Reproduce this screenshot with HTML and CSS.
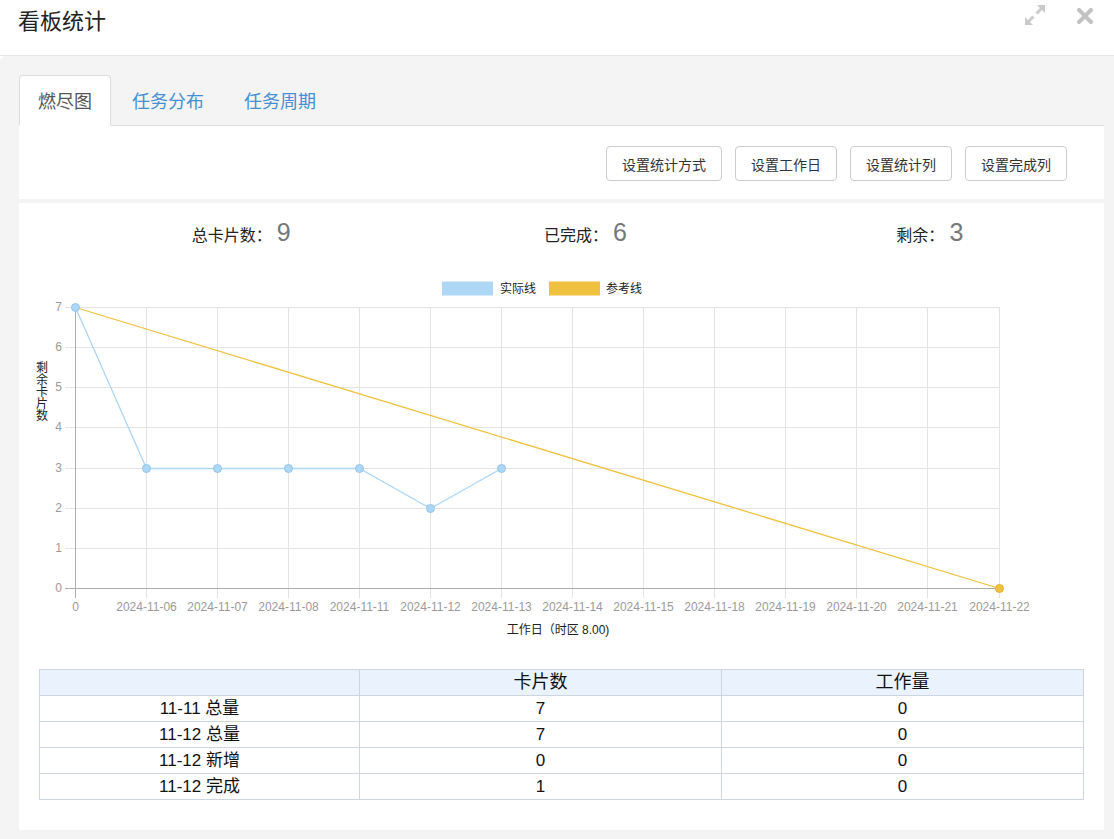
FILE: index.html
```html
<!DOCTYPE html>
<html lang="zh-CN">
<head>
<meta charset="utf-8">
<title>看板统计</title>
<link rel="stylesheet" href="styles.css">
</head>
<body>
<div class="header">
  <h1 class="title">看板统计</h1>
  <div class="win-actions">
    <svg class="icon-expand" width="22" height="22" viewBox="0 0 22 22">
      <polygon points="13,1 21,1 21,9" fill="#cacaca"/>
      <line x1="18" y1="4" x2="12.5" y2="9.5" stroke="#cacaca" stroke-width="3"/>
      <polygon points="1,13 1,21 9,21" fill="#cacaca"/>
      <line x1="4" y1="18" x2="9.5" y2="12.5" stroke="#cacaca" stroke-width="3"/>
    </svg>
    <svg class="icon-close" width="16" height="16" viewBox="0 0 16 16">
      <path d="M2 2 L14 14 M14 2 L2 14" stroke="#c2c2c2" stroke-width="4" stroke-linecap="round"/>
    </svg>
  </div>
</div>
<div class="main">
  <ul class="tabs">
    <li class="tab active">燃尽图</li>
    <li class="tab">任务分布</li>
    <li class="tab">任务周期</li>
  </ul>
  <div class="panel toolbar">
    <button class="btn">设置统计方式</button>
    <button class="btn">设置工作日</button>
    <button class="btn">设置统计列</button>
    <button class="btn">设置完成列</button>
  </div>
  <div class="panel chart-panel">
    <div class="stats">
      <div class="stat"><span class="stat-label">总卡片数：</span><span class="stat-num">9</span></div>
      <div class="stat"><span class="stat-label">已完成：</span><span class="stat-num">6</span></div>
      <div class="stat"><span class="stat-label">剩余：</span><span class="stat-num">3</span></div>
    </div>
    <svg class="chart" width="1085" height="390" viewBox="19 260 1085 390">
      <!-- legend -->
      <rect x="442" y="281.5" width="51" height="14" fill="#aed6f5"/>
      <text class="legend-text" x="500" y="293">实际线</text>
      <rect x="549" y="281.5" width="51" height="14" fill="#efc13e"/>
      <text class="legend-text" x="606" y="293">参考线</text>

      <!-- horizontal grid -->
      <g stroke="#e3e3e3" stroke-width="1">
        <line x1="65" y1="307.5" x2="999" y2="307.5"/>
        <line x1="65" y1="347.5" x2="999" y2="347.5"/>
        <line x1="65" y1="387.5" x2="999" y2="387.5"/>
        <line x1="65" y1="427.5" x2="999" y2="427.5"/>
        <line x1="65" y1="468.5" x2="999" y2="468.5"/>
        <line x1="65" y1="508.5" x2="999" y2="508.5"/>
        <line x1="65" y1="548.5" x2="999" y2="548.5"/>
      </g>
      <!-- vertical grid -->
      <g stroke="#e3e3e3" stroke-width="1">
        <line x1="146.5" y1="307" x2="146.5" y2="598"/>
        <line x1="217.5" y1="307" x2="217.5" y2="598"/>
        <line x1="288.5" y1="307" x2="288.5" y2="598"/>
        <line x1="359.5" y1="307" x2="359.5" y2="598"/>
        <line x1="430.5" y1="307" x2="430.5" y2="598"/>
        <line x1="501.5" y1="307" x2="501.5" y2="598"/>
        <line x1="572.5" y1="307" x2="572.5" y2="598"/>
        <line x1="643.5" y1="307" x2="643.5" y2="598"/>
        <line x1="714.5" y1="307" x2="714.5" y2="598"/>
        <line x1="785.5" y1="307" x2="785.5" y2="598"/>
        <line x1="856.5" y1="307" x2="856.5" y2="598"/>
        <line x1="927.5" y1="307" x2="927.5" y2="598"/>
        <line x1="999.5" y1="307" x2="999.5" y2="598"/>
      </g>
      <!-- axes -->
      <line x1="65" y1="588.5" x2="1000" y2="588.5" stroke="#acacac"/>
      <line x1="75.5" y1="307" x2="75.5" y2="598" stroke="#acacac"/>

      <!-- y labels -->
      <g class="tick-text" text-anchor="end">
        <text x="62" y="311">7</text>
        <text x="62" y="351">6</text>
        <text x="62" y="391">5</text>
        <text x="62" y="431">4</text>
        <text x="62" y="472">3</text>
        <text x="62" y="512">2</text>
        <text x="62" y="552">1</text>
        <text x="62" y="592">0</text>
      </g>
      <!-- y title -->
      <text class="axis-title" x="42" y="372" text-anchor="middle">
        <tspan x="42">剩</tspan><tspan x="42" dy="12">余</tspan><tspan x="42" dy="12">卡</tspan><tspan x="42" dy="12">片</tspan><tspan x="42" dy="12">数</tspan>
      </text>

      <!-- x labels -->
      <g class="tick-text" text-anchor="middle">
        <text x="75.5" y="611">0</text>
        <text x="146.5" y="611">2024-11-06</text>
        <text x="217.5" y="611">2024-11-07</text>
        <text x="288.5" y="611">2024-11-08</text>
        <text x="359.5" y="611">2024-11-11</text>
        <text x="430.5" y="611">2024-11-12</text>
        <text x="501.5" y="611">2024-11-13</text>
        <text x="572.5" y="611">2024-11-14</text>
        <text x="643.5" y="611">2024-11-15</text>
        <text x="714.5" y="611">2024-11-18</text>
        <text x="785.5" y="611">2024-11-19</text>
        <text x="856.5" y="611">2024-11-20</text>
        <text x="927.5" y="611">2024-11-21</text>
        <text x="999.5" y="611">2024-11-22</text>
      </g>
      <text class="axis-title" x="558" y="634" text-anchor="middle">工作日（时区 8.00)</text>

      <!-- reference line -->
      <line x1="75.5" y1="307.5" x2="999.5" y2="588.5" stroke="#efc13e" stroke-width="1.3"/>
      <circle cx="999.5" cy="588.5" r="4" fill="#efc13e" stroke="#e2b22e" stroke-width="1"/>

      <!-- actual line -->
      <polyline points="75.5,307.5 146.5,468.5 217.5,468.5 288.5,468.5 359.5,468.5 430.5,508.5 501.5,468.5" fill="none" stroke="#aed6f5" stroke-width="1.3"/>
      <g fill="#aed6f5" stroke="#95c6ec" stroke-width="1">
        <circle cx="75.5" cy="307.5" r="4"/>
        <circle cx="146.5" cy="468.5" r="4"/>
        <circle cx="217.5" cy="468.5" r="4"/>
        <circle cx="288.5" cy="468.5" r="4"/>
        <circle cx="359.5" cy="468.5" r="4"/>
        <circle cx="430.5" cy="508.5" r="4"/>
        <circle cx="501.5" cy="468.5" r="4"/>
      </g>
    </svg>
    <div class="table-wrap">
      <table class="data-table">
        <colgroup>
          <col class="col-a">
          <col class="col-b">
          <col class="col-c">
        </colgroup>
        <thead>
          <tr><th></th><th>卡片数</th><th>工作量</th></tr>
        </thead>
        <tbody>
          <tr><td>11-11 总量</td><td>7</td><td>0</td></tr>
          <tr><td>11-12 总量</td><td>7</td><td>0</td></tr>
          <tr><td>11-12 新增</td><td>0</td><td>0</td></tr>
          <tr><td>11-12 完成</td><td>1</td><td>0</td></tr>
        </tbody>
      </table>
    </div>
  </div>
</div>
</body>
</html>
```

FILE: styles.css
```css
* { box-sizing: border-box; }
html, body {
  margin: 0;
  padding: 0;
  background: #ffffff;
  font-family: "Liberation Sans", "Noto Sans CJK SC", sans-serif;
  color: #333;
}
body { height: 839px; overflow: hidden; display: flex; flex-direction: column; }

.header {
  height: 56px;
  flex: 0 0 56px;
  display: flex;
  justify-content: space-between;
  align-items: flex-start;
  padding: 0 18px;
  border-bottom: 1px solid #e5e5e5;
  background: #fff;
}
.title {
  margin: 0;
  font-size: 22px;
  font-weight: normal;
  line-height: 38px;
  color: #222;
  font-family: "Noto Sans CJK SC", sans-serif;
}
.win-actions {
  display: flex;
  align-items: center;
  gap: 31px;
  padding-top: 4px;
  margin-right: 3px;
}
.icon-expand { display: block; }
.icon-close { display: block; margin-top: 1px; }

.main {
  flex: 1;
  background: #f4f4f4;
  border-top-left-radius: 6px;
  padding: 19px 10px 10px 19px;
  display: flex;
  flex-direction: column;
}

.tabs {
  list-style: none;
  margin: 0;
  padding: 0;
  display: flex;
  border-bottom: 1px solid #dddddd;
  gap: 2px;
}
.tab {
  margin-bottom: -1px;
  padding: 0 18px;
  line-height: 48px;
  padding-bottom: 1px;
  font-size: 18px;
  border: 1px solid transparent;
  border-radius: 4px 4px 0 0;
  color: #4590d3;
  font-family: "Noto Sans CJK SC", sans-serif;
}
.tab.active {
  background: #fff;
  border-color: #dddddd;
  border-bottom-color: #fff;
  color: #555;
}

.panel { background: #fff; }
.toolbar {
  display: flex;
  justify-content: flex-end;
  gap: 13px;
  padding: 20px 37px 18px 0;
}
.btn {
  height: 35px;
  padding: 0 15px;
  font-size: 14px;
  font-family: "Noto Sans CJK SC", sans-serif;
  color: #333;
  background: #fff;
  border: 1px solid #cccccc;
  border-radius: 4px;
}

.chart-panel {
  margin-top: 4px;
  flex: 1;
  padding: 14px 0 30px 0;
}
.stats {
  display: grid;
  grid-template-columns: 1fr 1fr 1fr;
  padding: 0 2px 0 50px;
  height: 30px;
  align-items: center;
}
.stat {
  text-align: center;
  white-space: nowrap;
}
.stat-label {
  font-size: 16px;
  color: #222;
  font-family: "Noto Sans CJK SC", sans-serif;
}
.stat-num {
  font-size: 25px;
  color: #777;
  font-family: "Liberation Sans", sans-serif;
  margin-left: 5px;
}

.chart {
  display: block;
  margin-top: 13px;
}
.legend-text {
  font-size: 12px;
  fill: #222;
  font-family: "Noto Sans CJK SC", sans-serif;
}
.tick-text text {
  font-size: 12px;
  fill: #9a9a9a;
  font-family: "Liberation Sans", sans-serif;
}
.axis-title {
  font-size: 12px;
  fill: #222;
  font-family: "Liberation Sans", "Noto Sans CJK SC", sans-serif;
}

.table-wrap {
  margin: 19px 21px 0 20px;
}
.data-table {
  width: 100%;
  border-collapse: collapse;
  table-layout: fixed;
  font-size: 17px;
  color: #111;
}
.col-a { width: 320px; }
.col-b { width: 362px; }
.col-c { width: 362px; }
.data-table th,
.data-table td {
  border: 1px solid #cdd5e0;
  padding: 0;
  line-height: 25px;
  text-align: center;
  font-weight: normal;
}
.data-table thead th { background: #eaf2fd; font-size: 18px; }
```
